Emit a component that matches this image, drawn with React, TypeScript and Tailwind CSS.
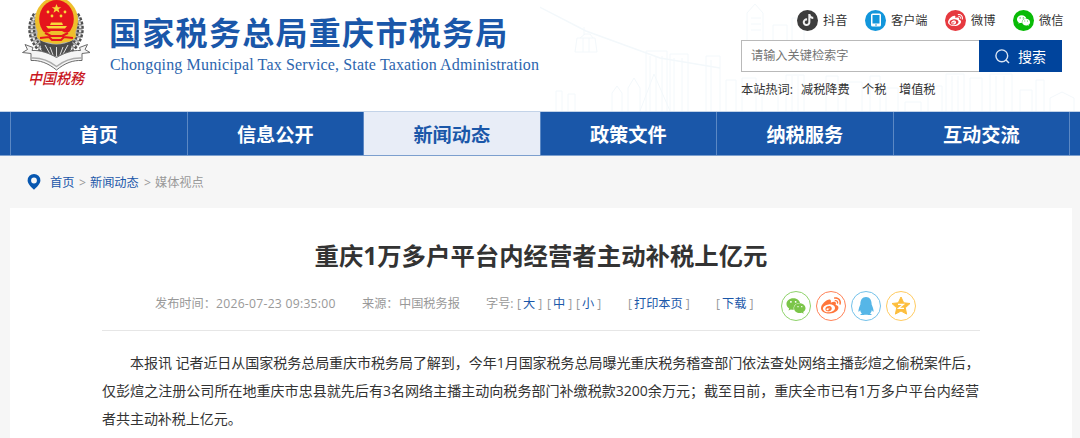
import type { ReactNode } from 'react'
import { AiFillWechat } from 'react-icons/ai'
import { FaWeibo, FaTiktok, FaWeixin, FaQq } from 'react-icons/fa'

const navItems = ['首页', '信息公开', '新闻动态', '政策文件', '纳税服务', '互动交流']

function Emblem() {
  return (
    <svg width="72" height="92" viewBox="0 0 72 92" className="block">
      <path d="M14 13C3 27 8 47 30 58h10C62 47 67 27 56 13z" fill="#b4b4b4" />
      <g fill="none" stroke="#4f4f4f" strokeWidth="7" strokeDasharray="2.6 1.4">
        <path d="M15 15C6 28 11 47 31 57" />
        <path d="M55 15C64 28 59 47 39 57" />
      </g>
      <g fill="none" stroke="#e6e6e6" strokeWidth="2.2" strokeDasharray="2.2 1.8">
        <path d="M15 15C6 28 11 47 31 57" />
        <path d="M55 15C64 28 59 47 39 57" />
      </g>
      <path d="M19 40Q35 49 52 40L49 52Q35 60 21 52Z" fill="#4c4c4c" />
      <g stroke="#ddd" strokeWidth="1" fill="none">
        <path d="M24 45l5 9M29 47l3 8M35.500 47v9M42 47l-3 8M47 45l-5 9" />
      </g>
      <path
        d="M1.500 52.500l5-3-2.500-5 8 3-1 3c8-.5 17 2.500 24.500 7 7.500-4.500 16-7.500 24-7l-1-3 8-3-2.500 5 5 3-8 1v7c-9-.5-17 2.500-25.500 9.500-8.500-7-17-10-25.500-9.500v-7z"
        fill="#f4f4f4"
        stroke="#6b6b6b"
        strokeWidth="1"
      />
      <path d="M11 58c9-.3 17 2.500 24.500 8.500C43 60.500 52 57.700 60.500 58" fill="none" stroke="#aaa" strokeWidth="1.500" />
      <ellipse cx="35.500" cy="20.500" rx="21.500" ry="23.500" fill="#eebf2c" />
      <ellipse cx="35.500" cy="19" rx="17.300" ry="19" fill="#e5151c" />
      <path d="M35.500 4l1.300 3.200h3.400l-2.700 2.100 1 3.400-3-2-3 2 1-3.400-2.700-2.100h3.400z" fill="#f8d83a" />
      <g fill="#f8d83a">
        <circle cx="27" cy="12" r="1.400" />
        <circle cx="31" cy="16" r="1.400" />
        <circle cx="40" cy="16" r="1.400" />
        <circle cx="44" cy="12" r="1.400" />
        <path d="M30 22.500h11l1 2.500H29zM25 26h21l-2 2.500H27z" />
      </g>
      <path d="M17 29q8 6 13 2h11q5 4 13-2l1 8q-5 6-12 5h-15q-8 1-12-5z" fill="#eebf2c" />
      <path d="M24 33l6 3h11l6-3M19 38l9-1 3 3h9l3-3 9 1" fill="none" stroke="#e5151c" strokeWidth="2" />
      <text
        x="7"
        y="84"
        textLength="56"
        lengthAdjust="spacingAndGlyphs"
        fontSize="15"
        fontWeight="500"
        fontStyle="italic"
        fill="#c9171e"
        fontFamily="'Liberation Serif', 'Noto Sans CJK SC', serif"
      >
        中国税務
      </text>
    </svg>
  )
}

function Skyline() {
  return (
    <svg
      className="absolute top-0 right-0"
      width="540"
      height="111"
      viewBox="540 0 540 111"
      fill="none"
      stroke="#f3f8fb"
    >
      <path d="M526 0L586 31 660 58 720 68" strokeWidth="1.5" />
      <path d="M584 27v8M577 38h18l2 14h-22zM580 38l5-4h5l3 4M583 38v14M589 38v14" />
      <path d="M556 111V91h6v20M568 111V94h7v17M612 111V93l5-7 5 7v18M628 111V88l6-10 6 10v23" />
      <path d="M646 111V51h21v60M670 111V54h18v57M650 56v55M656 56v55M662 56v55M674 58v53M682 58v53" />
      <path d="M654 74l-14 37M654 74l16 37M706 111V56h14v55M711 60v51M726 111V80h10v31" />
      <path d="M747 40V13l8-9 8 9v27M751 18h10M751 24h10M751 30h10M773 40V25h14v15M792 40V18h12v22" />
      <path d="M742 111V78h14v33M762 111V84h16v27M786 111V75h18v36M792 76v35M798 76v35" />
      <path d="M826 111V76h12v35M846 111V82h16v29M870 111V76h10v35M886 111V88h12v23" />
      <path d="M905 111v-9h16v9M928 111V86h14v25M946 111V74h18v37M952 76v35M958 76v35M970 111V78h12v33" />
      <path d="M990 111V74h22v37M996 76v35M1004 76v35M1020 111V90h12v21M1036 111V80h8v31M1050 111V98l12-6 12 6v13" />
    </svg>
  )
}

function DouyinBadge() {
  return (
    <span className="flex size-[21px] items-center justify-center rounded-full bg-[#3d3d3d] text-[#f0f0f0]">
      <FaTiktok size={12} />
    </span>
  )
}

function AppBadge() {
  return (
    <span className="flex size-[21px] items-center justify-center rounded-full bg-[#1296db]">
      <svg width="12" height="14" viewBox="0 0 12 14">
        <rect x="1" y="0.500" width="10" height="13" rx="1.500" fill="#fff" />
        <rect x="2.500" y="2" width="7" height="8.500" fill="#1296db" />
        <circle cx="6" cy="12" r="0.800" fill="#1296db" />
      </svg>
    </span>
  )
}

function WeiboBadge() {
  return (
    <span className="flex size-[21px] items-center justify-center rounded-full bg-[#e6393f] text-white">
      <FaWeibo size={15} />
    </span>
  )
}

function WechatBadge() {
  return (
    <span className="flex size-[21px] items-center justify-center rounded-full bg-[#09bb07] text-white">
      <AiFillWechat size={15} />
    </span>
  )
}

function SocialLink({ icon, label, className }: { icon: ReactNode; label: string; className: string }) {
  return (
    <a className={`flex items-center gap-[5px] ${className}`}>
      {icon}
      <span className="pt-px text-[12.2px] leading-5 text-[#333]">{label}</span>
    </a>
  )
}

function Header() {
  return (
    <header className="relative h-[111px] overflow-hidden bg-white">
      <Skyline />
      <div className="relative flex justify-between">
        <div className="flex pl-[21px]">
          <Emblem />
          <div className="pt-[13px] pl-4">
            <h1 className="text-[32px] leading-[40px] font-bold tracking-[1.3px] whitespace-nowrap text-[#1a57a9]">
              国家税务总局重庆市税务局
            </h1>
            <p className="pl-px font-['Liberation_Serif',serif] text-[16px] leading-[23px] tracking-[0.15px] whitespace-nowrap text-[#2c65ae]">
              Chongqing Municipal Tax Service, State Taxation Administration
            </p>
          </div>
        </div>

        <div className="w-[339px]">
          <div className="flex h-[40px] pl-[56px]">
            <SocialLink icon={<DouyinBadge />} label="抖音" className="w-[68px]" />
            <SocialLink icon={<AppBadge />} label="客户端" className="w-[80px]" />
            <SocialLink icon={<WeiboBadge />} label="微博" className="w-[68px]" />
            <SocialLink icon={<WechatBadge />} label="微信" className="" />
          </div>
          <div className="flex h-8 w-[321px]">
            <div className="flex flex-1 items-center border border-r-0 border-[#b9b9b9] bg-white pt-px pl-[9px] text-[12.2px] text-[#757575]">
              请输入关键检索字
            </div>
            <button className="flex w-[83px] items-center bg-[#00449c] pl-4 text-[14px] text-white">
              <svg width="15" height="15" viewBox="0 0 15 15" fill="none" stroke="#dbe6f4" strokeWidth="1.4">
                <circle cx="6.800" cy="6.800" r="5.900" />
                <path d="M11 11l3 3" />
              </svg>
              <span className="ml-2">搜索</span>
            </button>
          </div>
          <div className="flex pt-2 text-[12.2px] leading-5 text-[#333]">
            <span className="w-[60px]">本站热词:</span>
            <a className="w-[61px]">减税降费</a>
            <a className="w-[37px]">个税</a>
            <a>增值税</a>
          </div>
        </div>
      </div>
    </header>
  )
}

function Nav() {
  return (
    <nav className="flex h-[45px] border-t border-b border-t-[#c3d3e8] border-b-[#7c9fce] bg-[#1a57a9] pl-[10px]">
      {navItems.map(item => (
        <a
          key={item}
          className={`flex w-[176.5px] items-center justify-center border-l border-[#5b88c4] pt-[3px] text-[19.2px] font-bold ${
            item === '新闻动态' ? 'bg-[#e8edf7] text-[#1a57a9]' : 'text-white'
          }`}
        >
          {item}
        </a>
      ))}
      <span className="border-l border-[#5b88c4]" />
    </nav>
  )
}

function Breadcrumb() {
  return (
    <div className="flex h-[52px] items-center pl-[27px] text-[12.2px] text-[#999]">
      <svg width="14" height="16" viewBox="0 0 13 16" className="mr-[9px]">
        <path
          fillRule="evenodd"
          d="M6.500 0A6.400 6.400 0 0 0 .1 6.400C.1 10 4 13 6.500 15.800 9 13 12.900 10 12.900 6.400A6.400 6.400 0 0 0 6.500 0zm0 3.600a2.900 2.900 0 1 1 0 5.800 2.900 2.900 0 0 1 0-5.800z"
          fill="#0757b0"
        />
      </svg>
      <div className="flex pt-[2px]">
        <a className="w-[29px] text-[#1a57a9]">首页</a>
        <span className="w-[11px]">&gt;</span>
        <a className="w-[54px] text-[#1a57a9]">新闻动态</a>
        <span className="w-[11px]">&gt;</span>
        <span>媒体视点</span>
      </div>
    </div>
  )
}

function Bracket({ children, className }: { children: ReactNode; className: string }) {
  return (
    <span className={`flex ${className}`}>
      <span className="w-[6px]">[</span>
      <a className="text-[#1a57a9]">{children}</a>
      <span className="ml-[3px]">]</span>
    </span>
  )
}

function Share() {
  return (
    <div className="flex gap-[5px] pt-[2px]">
      <a className="flex size-[30px] items-center justify-center rounded-full border-[1.5px] border-[#8fd36b] text-[#7bc549]">
        <FaWeixin size={20} />
      </a>
      <a className="flex size-[30px] items-center justify-center rounded-full border-[1.5px] border-[#ff8257] text-[#ff763b]">
        <FaWeibo size={20} />
      </a>
      <a className="flex size-[30px] items-center justify-center rounded-full border-[1.5px] border-[#74c2ea] text-[#56b6e7]">
        <FaQq size={18} />
      </a>
      <a className="flex size-[30px] items-center justify-center rounded-full border-[1.5px] border-[#ffcb60] text-[#fdbe3d]">
        <svg width="20" height="20" viewBox="0 0 20 20">
          <path
            d="M10 1l2.700 5.800 6.300.7-4.700 4.300 1.300 6.300L10 15l-5.600 3.100 1.300-6.300L1 7.500l6.300-.7z"
            fill="currentColor"
            stroke="currentColor"
            strokeLinejoin="round"
          />
          <path d="M7 8.300h5.500L7.500 12.300h5.500" fill="none" stroke="#fff" strokeWidth="1.200" />
        </svg>
      </a>
    </div>
  )
}

function Article() {
  return (
    <main className="mr-2 ml-[10px] h-[230px] bg-white px-[92px] pt-7">
      <h2 className="text-center text-[24.4px] leading-10 font-bold whitespace-nowrap text-[#333]">
        重庆1万多户平台内经营者主动补税上亿元
      </h2>
      <div className="flex h-[55px] items-center border-b border-[#e6e6e6] pt-[3px] pl-[53px] text-[12.2px] whitespace-nowrap text-[#999]">
        <span className="w-[61px]">发布时间：</span>
        <span className="w-[146px] tracking-[0.25px]">2026-07-23 09:35:00</span>
        <span className="w-[37px]">来源：</span>
        <span className="w-[87px]">中国税务报</span>
        <span className="w-[31px]">字号:</span>
        <Bracket className="w-[30px]">大</Bracket>
        <Bracket className="w-[29px]">中</Bracket>
        <Bracket className="w-[52px]">小</Bracket>
        <Bracket className="w-[88px]">打印本页</Bracket>
        <Bracket className="w-[65px]">下载</Bracket>
        <Share />
      </div>
      <div className="pt-[18px] text-[14.05px] leading-7 whitespace-nowrap text-[#333]">
        <p className="pl-7 tracking-[-0.08px]">
          本报讯 记者近日从国家税务总局重庆市税务局了解到，今年1月国家税务总局曝光重庆税务稽查部门依法查处网络主播彭煊之偷税案件后，
        </p>
        <p>仅彭煊之注册公司所在地重庆市忠县就先后有3名网络主播主动向税务部门补缴税款3200余万元；截至目前，重庆全市已有1万多户平台内经营</p>
        <p className="tracking-[-0.08px]">者共主动补税上亿元。</p>
      </div>
    </main>
  )
}

export default function App() {
  return (
    <div className="h-[438px] w-[1080px] overflow-hidden bg-[#f6f6f6] font-['Open_Sans','Noto_Sans_CJK_SC',sans-serif]">
      <Header />
      <Nav />
      <Breadcrumb />
      <Article />
    </div>
  )
}
